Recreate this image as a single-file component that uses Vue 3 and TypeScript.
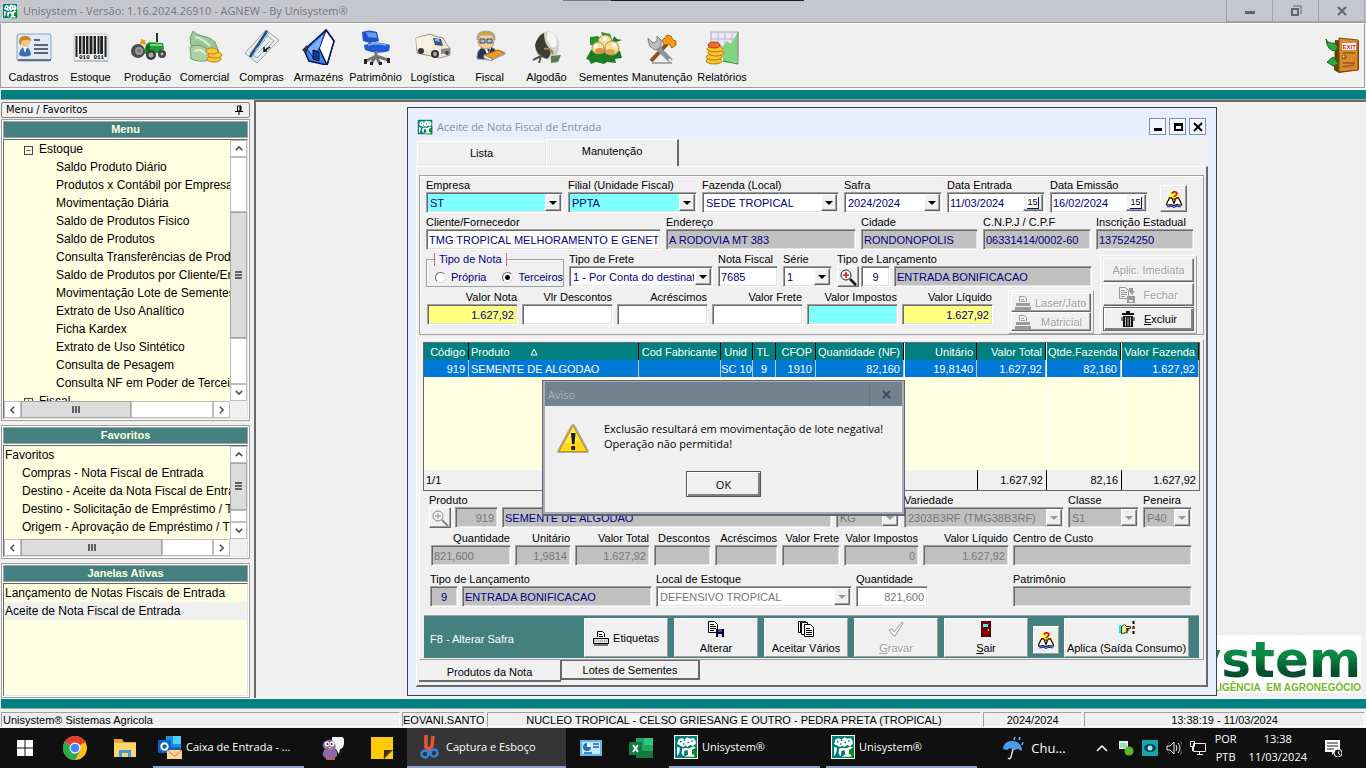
<script setup lang="ts">
import { ref } from 'vue'

type Kind = 'text' | 'select' | 'date' | 'gap' | 'find'
interface Field {
  id: string
  w: number
  label?: string
  value?: string
  kind?: Kind
  tone?: string
  right?: boolean
  labelRight?: boolean
  center?: boolean
  off?: boolean
}

const brand = '<rect width="16" height="16" fill="#fff"/><rect x=".7" y=".7" width="14.600" height="14.600" fill="#007c74"/><path d="M9 8h6.300v7.300H9z" fill="#008a1c"/><path d="M2 6l1-3 2-1 2 1 2-1.500 2 1 2-.5 1.500 2v2l-2 1.500-1.500-1L9 8 7.500 7 6 8 4 7z" fill="#fff"/><path d="M4 4h1v1H4zM6.500 3h1v1h-1zM9 4.500h1v1H9zM11.500 3.500h1v1h-1zM6 5.500h1v1H6z" fill="#007c74"/><path d="M2 8l2 .5L3.500 12 2 14h4l-1-2 .5-3L8 8.500 10 9l3-1.500 1.500 1L12 10v3h1.500v1.500H7L9.500 13l-.5-3-2 .5L6.500 14H2z" fill="#fff"/>'

const icons: Record<string, string> = {
  Cadastros: '<rect x="1" y="5" width="34" height="27" rx="2" fill="#dfe9f4" stroke="#8fa3bd"/><path d="M2 31h33" stroke="#456" stroke-width="1.5"/><path d="M3 26q1-8 6-8t6 8q-6 3-12 0" fill="#3a6fae"/><path d="M7 18l2 6 2-6z" fill="#fff"/><circle cx="9" cy="13" r="5" fill="#f3c48e"/><path d="M3 13q0-6 6-6t6 5q-4-2-8-1-2 1-2 5-2-1-2-3" fill="#c98316"/><path d="M18 11h6M18 16h14M18 20h14M18 24h14" stroke="#5b6573" stroke-width="2"/>',
  Estoque: '<rect x="1" y="5" width="34" height="27" rx="1" fill="#f2f2f4" stroke="#c3c6cc"/><path d="M3.500 7v21M7 7v18M11 7v18M14 7v18M18 7v18M22 7v18M25.500 7v18M29 7v18M32.500 7v21" stroke="#222" stroke-width="2"/><path d="M9 7v18M16 7v18M20 7v18M27.500 7v18" stroke="#444"/><text x="6" y="30" font-size="6" font-family="Liberation Mono" font-weight="bold">010 011</text><path d="M1 32h34" stroke="#9aa"/>',
  'Produção': '<path d="M16 16l3-3 14 1 1 6-6 4-15 1z" fill="#1f9a34"/><path d="M16 16l4-1v6l-4 1z" fill="#0d6b20"/><path d="M20 15h12v2H20z" fill="#6fd67c"/><path d="M10 15l1-5 4 1 1 5z" fill="#e8a21d"/><path d="M27 4v9" stroke="#333" stroke-width="2"/><circle cx="8" cy="22" r="7" fill="#4d4d4d"/><circle cx="9" cy="22" r="4" fill="#9a9a9a"/><circle cx="9" cy="22" r="2" fill="#777"/><circle cx="21" cy="26" r="5" fill="#3c3c3c"/><circle cx="21" cy="26" r="2.500" fill="#aaa"/><circle cx="32" cy="25" r="4" fill="#444"/><circle cx="32" cy="25" r="1.500" fill="#bbb"/>',
  Comercial: '<path d="M3 9l3-7q3 4 10 5t12 6l4 10-16 1-12-8z" fill="#9fc79a" stroke="#6f9f6d"/><path d="M8 8q7 1 15 9" stroke="#d9ecd2" fill="none" stroke-width="2"/><path d="M3 18q8-4 16 1l6 10q-8 6-21 1z" fill="#aed1a6" stroke="#6f9f6d"/><path d="M8 22q6-3 10 3" stroke="#e4f2df" fill="none" stroke-width="2"/><g fill="#f8c832" stroke="#bd8410"><ellipse cx="27" cy="30" rx="7" ry="3"/><ellipse cx="28" cy="26" rx="7" ry="3"/><ellipse cx="25" cy="22" rx="6" ry="3"/></g>',
  Compras: '<g fill="#e6ebee" stroke="#9aa5ab"><path d="M1 24L22 1l13 10-22 23z"/><path d="M6 24L22 6l8 6-17 17z"/></g><path d="M6 28L23 2" stroke="#1c4f87" stroke-width="2.500"/><path d="M8 28L25 4" stroke="#8db6da"/><path d="M14 24l12-12M11 21l10-10" stroke="#9aa5ab"/><path d="M20 22l6-4M20 18v4h3" stroke="#111" stroke-width="1.500" fill="none"/>',
  'Armazéns': '<path d="M3 21L25 1l8 11-7 24-18-4z" fill="#3f83f0" stroke="#06145a" stroke-width="1.500"/><path d="M25 1l8 11-7 24-8-17z" fill="#fff" stroke="#06145a" stroke-width="1.500"/><path d="M6 20L24 3l-5 15-7 10z" fill="#78aefc" stroke="#123a9a"/><path d="M12 21l6 2v9l-6-2z" fill="#0c3aa0" stroke="#011"/><path d="M1 21l5-5v9z" fill="#333"/>',
  'Patrimônio': '<path d="M4 3q7-3 15 0l2 9q-8 3-16 0z" fill="#1f52cf"/><path d="M8 3l10 1 1 5-9-1z" fill="#6e9bf2"/><path d="M11 13l3 4" stroke="#555" stroke-width="3"/><path d="M6 16q13-5 26 0l-1 6q-12 4-24-1z" fill="#2459d6"/><path d="M10 16q9-3 18 0" stroke="#7ea8f8" stroke-width="2" fill="none"/><path d="M18 22v6M18 27l-10 5M18 27l4 8M18 27l12 4M18 27l-5 8" stroke="#777" stroke-width="3"/><path d="M6 30h3v5H6zM12 33h3v3h-3zM21 33h3v3h-3zM29 29h3v5h-3z" fill="#222"/>',
  'Logística': '<path d="M1 9l14-4 5 2 8 2 4 7 3 3v7l-10 3-23-5z" fill="#ece6d4" stroke="#9b9480"/><path d="M1 9l15-3 2 15-16-1z" fill="#f6f1e2"/><path d="M18 9l8 1 2 7-8-1z" fill="#34507c"/><path d="M20 10l4 0 1 3-5-1z" fill="#90b0d8"/><path d="M26 20l9-1v5l-9 1z" fill="#888"/><circle cx="6" cy="22" r="3" fill="#333"/><circle cx="20" cy="25" r="4" fill="#333"/><circle cx="20" cy="25" r="2" fill="#aaa"/><circle cx="32" cy="24" r="2" fill="#444"/>',
  Fiscal: '<path d="M5 30q-1-9 6-12h8q6 2 7 9l-9 4z" fill="#27364f" stroke="#a9adb5"/><path d="M12 19l4 8 3-8z" fill="#fff"/><path d="M15 20l2 5 1-5z" fill="#2455aa"/><circle cx="14" cy="12" r="8" fill="#f6cf98" stroke="#bb955f"/><path d="M5 11q-1-9 9-9 10 0 9 9l-3-5H8z" fill="#d6a03a" stroke="#a5a7ad"/><path d="M8 10h5v4H8zM15 10h5v4h-5z" fill="#9fc6ea" stroke="#345"/><path d="M12 26l14-5 7 3-13 6z" fill="#f39a1b" stroke="#a6640e"/><path d="M12 26l8 4v2l-8-3zM20 31l13-6v-1l-13 6z" fill="#fff" stroke="#999"/>',
  'Algodão': '<path d="M6 16Q9 3 19 2q11 3 11 15 0 10-7 14l-11-2q-7-4-6-13" fill="#cfd2c9"/><path d="M6 16Q9 6 15 4q0 10 5 15 4 6-2 11-11-3-12-14" fill="#3c3e34"/><path d="M19 2q9 3 9 13-2 5-5 3-8-6-4-16" fill="#f7f7f2"/><path d="M15 20q7-2 9 5" stroke="#a18163" stroke-width="2" fill="none"/><path d="M4 31l8-4-2 7" stroke="#555" fill="none" stroke-width="2"/><path d="M22 27l10-1-3 7-7 1z" fill="#5e7a54"/>',
  Sementes: '<path d="M0 30l5-9 9-1 5 1 5-1 10 2 2 7-7 1 1 4-9-1-3 2-8-2-5 2-2-4z" fill="#1b7d26"/><path d="M4 8l8-1 6 5-6 5-8-1zM15 3l9 2 3 7-9 1z" fill="#279235"/><path d="M28 7l-2 7 4-1 6-2-5-1z" fill="#1b7d26"/><g fill="#f4e09a" stroke="#b3923f"><circle cx="19" cy="13" r="7"/><circle cx="12" cy="19" r="6"/><circle cx="26" cy="19" r="7"/></g><ellipse cx="14" cy="22" rx="5" ry="3" fill="#d99745"/><ellipse cx="24" cy="23" rx="5" ry="3" fill="#dfa253"/><circle cx="19" cy="10" r="2" fill="#fff"/><circle cx="28" cy="16" r="2" fill="#fff"/><circle cx="10" cy="17" r="2" fill="#fff"/>',
  'Manutenção': '<path d="M8 34h20" stroke="#aaa" stroke-width="2"/><path d="M7 32L23 15" stroke="#8d4f1e" stroke-width="4"/><path d="M18 11l3-2 2-3 4 1 2 4 3 1v4l-4 3-3-4-5 1z" fill="#f39a1b" stroke="#b26a0b"/><path d="M12 17l15 15" stroke="#8d939b" stroke-width="5"/><path d="M4 9l5 5 4-2 0-5 4 4v7l-5 3q-8-2-8-12" fill="#b9bec5" stroke="#7d838b"/><circle cx="26" cy="31" r="1.500" fill="#eee"/>',
  'Relatórios': '<rect x="7" y="3" width="27" height="24" fill="#ece8f6" stroke="#aaa"/><path d="M14 3v24M21 3v24M28 3v24M7 10h27M7 17h27" stroke="#bbb5cc"/><path d="M19 33V18l4-6 4 3 7-12v31z" fill="#7fd67f"/><path d="M34 3v32" stroke="#888"/><path d="M19 32l15 3" stroke="#3d8a3d"/><g fill="#fbc42d" stroke="#b77f0c"><ellipse cx="10" cy="32" rx="8" ry="3"/><ellipse cx="10" cy="28" rx="8" ry="3"/><ellipse cx="12" cy="24" rx="8" ry="3"/><ellipse cx="11" cy="20" rx="8" ry="3"/></g><ellipse cx="10" cy="16" rx="6" ry="3" fill="#ee6e25" stroke="#a63a10"/>',
  exit: '<path d="M10 3l24 1v29l-20 3-5-3z" fill="#6b3d0a"/><path d="M14 1l19 2v30l-19 2z" fill="#d98a2b" stroke="#7b4a10"/><path d="M18 16h12M18 26h12M17 30l12-2" stroke="#a9631a" stroke-width="2"/><rect x="17" y="6" width="14" height="7" fill="#fff"/><text x="17.500" y="12" font-size="6" font-weight="bold" fill="#e01020" font-family="Liberation Sans">EXIT</text><circle cx="19" cy="20" r="2.500" fill="#8a6a20"/><circle cx="18.500" cy="19.500" r="1" fill="#f5dd90"/><path d="M1 2q2 5 8 4l4 4-2 4q-9 0-10-12M2 25l6-5 6 7-6 2z" fill="#2fa83c" stroke="#0f6a1c"/>',
  help: '<path d="M4 1h8v10H4zM2 6h12v4H2z" fill="#ffff54"/><path d="M1.500 12l2.500-5 2 0 2 5 2-5 2 0 2.500 5v1.500l-4-.5-2.500 1-2.500-1-4 .5z" fill="#fff" stroke="#000"/><path d="M2 15l4-.5 2 1 2-1 4 .5" stroke="#1230d8" fill="none"/><text x="5" y="9" font-size="11" font-weight="bold" fill="#e00010" font-family="Liberation Sans">?</text>',
  mag: '<circle cx="7" cy="7" r="5" fill="#fff" stroke="#222"/><path d="M7 4v6M4 7h6" stroke="#e01010" stroke-width="1.500"/><path d="M11 11l6 6" stroke="#111" stroke-width="2.500"/>',
  magOff: '<circle cx="7" cy="7" r="5" fill="#f4f4f4" stroke="#888"/><path d="M7 4v6M4 7h6" stroke="#888"/><path d="M11 11l6 6" stroke="#888" stroke-width="2"/>',
  printer: '<path d="M4.500 7V1.500h5l2 2V7" fill="#fff" stroke="currentColor"/><path d="M6 4.500h3M6 6.500h4" stroke="currentColor"/><path d="M.5 8.500h15v5H.5z" fill="#ddd" stroke="currentColor"/><path d="M1 11h14" stroke="#888" stroke-dasharray="1 1"/><path d="M1 15h14" stroke="currentColor"/>',
  printerOff: '<path d="M4.500 7V1.500h5l2 2V7" fill="none" stroke="#999"/><path d="M6 4.500h3M6 6.500h4" stroke="#999"/><path d="M1 8h14v3H1zM0 12h16v3H0z" fill="#999"/>',
  save: '<path d="M.5.500h6l3 3v8h-9z" fill="#fff" stroke="currentColor"/><path d="M2 3.500h4M2 5.500h6M2 7.500h6M2 9.500h4" stroke="currentColor"/><path d="M8 8h8v8H8z" fill="currentColor"/><path d="M10 8h4v3h-4z" fill="#3a4ad0"/><path d="M10 13h4v3h-4z" fill="#ddd"/>',
  close: '<path d="M.5.500h6l3 3v8h-9z" fill="none" stroke="#999"/><path d="M2 3.500h4M2 5.500h6M2 7.500h6M2 9.500h4" stroke="#999"/><path d="M10 1h4v3h2l-3 4-3-4z" fill="#999"/><path d="M8 9h8v7H8z" fill="#999"/><path d="M10 13h4v2h-4z" fill="#f0f0f0"/>',
  trash: '<path d="M6 0h4v2H6zM2 2h12v2H2zM3 5h10v11H3z" fill="#111"/><path d="M5.500 6v9M8 6v9M10.500 6v9" stroke="#bbb"/><path d="M2 6v4M14 6v4" stroke="#111"/>',
  docs: '<g fill="#fff" stroke="#000"><path d="M.5.500h7v11h-7z"/><path d="M3.500 1.500h6v12h-6z"/><path d="M6.500 3.500h6l3 3v9h-9z"/></g><path d="M8 7.500h4M8 9.500h6M8 11.500h6M8 13.500h6M2.500 1v11" stroke="#000"/>',
  check: '<path d="M1 9l3-1 2 3 8-10 1 1-8 13H6z" fill="#fff" stroke="#999"/>',
  door: '<path d="M3 0h10v16H3z" fill="#7c0010"/><path d="M3.500 0v16h9V0z" fill="none" stroke="#400"/><path d="M5 3h5v3H5z" fill="#39f2f2"/><path d="M10 8h1v2h-1z" fill="#ff0"/>',
  hand: '<path d="M0 4h2v8H0z" fill="#0ee"/><path d="M2.500 5.500l3-2 2 2h4v2h-4v1h2v1h-2v1h1v1l-6 1z" fill="#ffe97a" stroke="#333"/><path d="M14.500 0v15" stroke="#000" stroke-width="2" stroke-dasharray="3 2"/><path d="M13.500 6h2v2h-2z" fill="#e00"/>',
  warn: '<path d="M16 1q1.500 0 2.500 2l13 24q1 2-1 3H1.500q-2-1-1-3l13-24Q14.500 1 16 1" fill="#aaa"/><path d="M16 2.500L30 28.500H2z" fill="#ffd91a" stroke="#c99900"/><path d="M16 4l-8 16q10 2 14-4z" fill="#fff27a" opacity=".6"/><path d="M14 10h4.500l-1 11h-2.500z" fill="#1d1d1d"/><circle cx="16.200" cy="25" r="2.200" fill="#1d1d1d"/>',
  chrome: '<circle cx="12" cy="12" r="12" fill="#fbc116"/><path d="M12 12L1.600 6A12 12 0 0 1 22.400 6z" fill="#e33b2e"/><path d="M12 12L1.600 6A12 12 0 0 0 12 24l5-9z" fill="#2da94f"/><circle cx="12" cy="12" r="5.500" fill="#fff"/><circle cx="12" cy="12" r="4.300" fill="#4285f4"/>',
  folder: '<path d="M1 3h8l2 3h12v15H1z" fill="#e9a820"/><path d="M1 7h22v14H1z" fill="#fbd66a"/><path d="M6 14h12v7H6z" fill="#3d9be0"/><path d="M9 17h6v4H9z" fill="#fbd66a"/>',
  outlook: '<path d="M8 1h15v15H8z" fill="#1f8fdc"/><path d="M15 1h8v8h-8z" fill="#50d0ff"/><path d="M8 12h15v6H8z" fill="#0f64b4"/><rect y="5" width="13" height="13" rx="1" fill="#0a62c0"/><circle cx="6.500" cy="11.500" r="3.200" fill="none" stroke="#fff" stroke-width="2"/><path d="M9 15h15v9H9z" fill="#ffd199"/><path d="M9 15l7.500 6L24 15" fill="none" stroke="#b97f3c"/>',
  bird: '<path d="M12 1h10q3 1 2 7-1 5-4 5l-1 5-3-5h-4z" fill="#f5f5f7"/><path d="M4 6q6-5 10 0 3 4 1 7 5 5 0 9-7 3-11-1-3-3 1-8-4-3-1-7" fill="#8a6aa8"/><circle cx="7" cy="8" r="2.500" fill="#fff"/><circle cx="12" cy="8" r="2.500" fill="#fff"/><circle cx="7.500" cy="8" r="1" fill="#222"/><circle cx="11.500" cy="8" r="1" fill="#222"/><path d="M8 11l4 0-2 3z" fill="#f2a73a"/><path d="M6 22h9v2H6z" fill="#c95b3a"/>',
  sticky: '<path d="M1 1h22v22H1z" fill="#ffca0a"/><path d="M14 23q-2-8 9-9z" fill="#5b4a12"/><path d="M14 14h9q-6 1-9 9z" fill="#3a3010"/>',
  snip: '<path d="M8 0v12l4 4M15 1l-1 10-4 5" fill="none" stroke="#e8542f" stroke-width="3.500"/><circle cx="7" cy="19" r="3.500" fill="none" stroke="#2f86e0" stroke-width="2.500"/><circle cx="16" cy="18" r="3.500" fill="none" stroke="#2f86e0" stroke-width="2.500"/>',
  panel: '<path d="M1 4h22v16H1z" fill="#5fb7f0"/><path d="M3 6h18v12H3z" fill="#c8e9fb"/><circle cx="8" cy="11" r="4" fill="#2470b8"/><path d="M8 11V7a4 4 0 0 1 4 4z" fill="#fff"/><path d="M14 8h6M14 11h6M5 17h8" stroke="#1c66a8" stroke-width="1.500"/>',
  excel: '<path d="M7 2h17v20H7z" fill="#21a366"/><path d="M15 2h9v7h-9z" fill="#33c481"/><path d="M7 15h17v7H7z" fill="#107c41"/><rect y="6" width="13" height="13" rx="1" fill="#107c41"/><path d="M4 9l5 7M9 9l-5 7" stroke="#fff" stroke-width="1.800"/>',
  rain: '<path d="M2 13Q3 4 12 5q9 1 9 10l-4-2-4 1-4-2-3 2z" fill="#4a9be8"/><path d="M12 13l-2 8q-1 3-3 1" stroke="#ddd" stroke-width="1.500" fill="none"/><path d="M14 1l-1 3M19 1l-1 3M22 6l-1 3" stroke="#6cb8ff" stroke-width="1.500"/>',
  win: '<path d="M0 0h7.500v7.500H0zM8.500 0H16v7.500H8.500zM0 8.500h7.500V16H0zM8.500 8.500H16V16H8.500z" fill="#fff"/>',
  t1: '<path d="M1 1h9v8l-9 0z" fill="#e8eef0"/><path d="M2 3h7v5H2z" fill="#9db"/><circle cx="11" cy="11" r="4.500" fill="#5cb531"/>',
  t2: '<rect width="16" height="16" rx="1" fill="#18a5ad"/><ellipse cx="8" cy="8" rx="6" ry="4" fill="#0b3f50"/><circle cx="8" cy="8" r="2.500" fill="#9ee"/>',
  t3: '<path d="M1 6h3l4-4v12l-4-4H1z" fill="none" stroke="#eee"/><path d="M10 5q2 3 0 6M12 3q4 5 0 10" stroke="#eee" fill="none"/><path d="M14.500 1.500q4 6 0 13" stroke="#777" fill="none"/>',
  t4: '<path d="M3.500 3.500h12v8h-12zM7 14.500h6M9.500 12v3M.5 1.500h4v5h-4zM2.500 7v4" fill="none" stroke="#eee"/>',
  note: '<path d="M1 1h15v12h-5l-3 3v-3H1z" fill="#fff"/><path d="M3 4h11M3 7h11M3 10h7" stroke="#222"/><circle cx="14" cy="14" r="4" fill="#111" stroke="#fff"/><path d="M15 12q-2 2 1 4" stroke="#fff" fill="none"/>',
}

const modules = ['Cadastros', 'Estoque', 'Produção', 'Comercial', 'Compras', 'Armazéns', 'Patrimônio', 'Logística', 'Fiscal', 'Algodão', 'Sementes', 'Manutenção', 'Relatórios']
const tree = ['Saldo Produto Diário', 'Produtos x Contábil por Empresa', 'Movimentação Diária', 'Saldo de Produtos Fisico', 'Saldo de Produtos', 'Consulta Transferências de Produtos', 'Saldo de Produtos por Cliente/Empresa', 'Movimentação Lote de Sementes', 'Extrato de Uso Analítico', 'Ficha Kardex', 'Extrato de Uso Sintético', 'Consulta de Pesagem', 'Consulta NF em Poder de Terceiros']
const favorites = ['Compras - Nota Fiscal de Entrada', 'Destino - Aceite da Nota Fiscal de Entrada', 'Destino - Solicitação de Empréstimo / Transferência', 'Origem - Aprovação de Empréstimo / Transferência']

const rowHead: Field[] = [
  { id: 'empresa', w: 137, label: 'Empresa', value: 'ST', kind: 'select', tone: 'cyan' },
  { id: 'filial', w: 129, label: 'Filial (Unidade Fiscal)', value: 'PPTA', kind: 'select', tone: 'cyan' },
  { id: 'fazenda', w: 137, label: 'Fazenda (Local)', value: 'SEDE TROPICAL', kind: 'select' },
  { id: 'safra', w: 98, label: 'Safra', value: '2024/2024', kind: 'select' },
  { id: 'entrada', w: 98, label: 'Data Entrada', value: '11/03/2024', kind: 'date' },
  { id: 'emissao', w: 98, label: 'Data Emissão', value: '16/02/2024', kind: 'date' },
]
const rowParty: Field[] = [
  { id: 'cliente', w: 235, label: 'Cliente/Fornecedor', value: 'TMG TROPICAL MELHORAMENTO E GENETICA LTDA' },
  { id: 'endereco', w: 190, label: 'Endereço', value: 'A RODOVIA MT 383', tone: 'gray' },
  { id: 'cidade', w: 117, label: 'Cidade', value: 'RONDONOPOLIS', tone: 'gray' },
  { id: 'cnpj', w: 108, label: 'C.N.P.J / C.P.F', value: '06331414/0002-60', tone: 'gray' },
  { id: 'ie', w: 98, label: 'Inscrição Estadual', value: '137524250', tone: 'gray' },
]
const rowType: Field[] = [
  { id: 'frete', w: 144, label: 'Tipo de Frete', value: '1 - Por Conta do destinatário', kind: 'select' },
  { id: 'nota', w: 60, label: 'Nota Fiscal', value: '7685' },
  { id: 'serie', w: 49, label: 'Série', value: '1', kind: 'select' },
]
const rowTotals: Field[] = [
  { id: 'vnota', w: 91, label: 'Valor Nota', value: '1.627,92', tone: 'yellow' },
  { id: 'vdesc', w: 91, label: 'Vlr Descontos', value: '' },
  { id: 'vacr', w: 91, label: 'Acréscimos', value: '' },
  { id: 'vfrete', w: 91, label: 'Valor Frete', value: '' },
  { id: 'vimp', w: 91, label: 'Valor Impostos', value: '', tone: 'cyan' },
  { id: 'vliq', w: 91, label: 'Valor Líquido', value: '1.627,92', tone: 'yellow' },
].map((f) => ({ ...f, right: true, labelRight: true }))

const rowItem: Field[] = [
  { id: 'busca', w: 22, label: 'Produto', kind: 'find' },
  { id: 'codProduto', w: 43, value: '919', tone: 'gray', right: true, off: true },
  { id: 'nomeProduto', w: 330, value: 'SEMENTE DE ALGODAO', tone: 'gray' },
  { id: 'unidade', w: 64, value: 'KG', kind: 'select', tone: 'gray', off: true },
  { id: 'variedade', w: 160, label: 'Variedade', value: '2303B3RF (TMG38B3RF)', kind: 'select', tone: 'gray', off: true },
  { id: 'classe', w: 71, label: 'Classe', value: 'S1', kind: 'select', tone: 'gray', off: true },
  { id: 'peneira', w: 49, label: 'Peneira', value: 'P40', kind: 'select', tone: 'gray', off: true },
]
const rowAmounts: Field[] = [
  { id: 'qtd', w: 80, label: 'Quantidade', value: '821,600', labelRight: true },
  { id: 'unit', w: 56, label: 'Unitário', value: '1,9814', right: true, labelRight: true },
  { id: 'vtotal', w: 75, label: 'Valor Total', value: '1.627,92', right: true, labelRight: true },
  { id: 'desc', w: 57, label: 'Descontos', value: '', labelRight: true },
  { id: 'acr', w: 63, label: 'Acréscimos', value: '', labelRight: true },
  { id: 'frete2', w: 58, label: 'Valor Frete', value: '', labelRight: true },
  { id: 'imp2', w: 75, label: 'Valor Impostos', value: '0', right: true, labelRight: true },
  { id: 'liq2', w: 86, label: 'Valor Líquido', value: '1.627,92', right: true, labelRight: true },
  { id: 'custo', w: 179, label: 'Centro de Custo', value: '' },
].map((f) => ({ ...f, tone: 'gray', off: true }))
const rowStock: Field[] = [
  { id: 'tl', w: 28, label: 'Tipo de Lançamento', value: '9', tone: 'gray', center: true },
  { id: 'tlDesc', w: 190, value: 'ENTRADA BONIFICACAO', tone: 'gray' },
  { id: 'local', w: 196, label: 'Local de Estoque', value: 'DEFENSIVO TROPICAL', kind: 'select', off: true },
  { id: 'qtdEst', w: 72, label: 'Quantidade', value: '821,600', right: true, off: true },
  { id: 'espaco', w: 77, kind: 'gap' },
  { id: 'patr', w: 179, label: 'Patrimônio', value: '', tone: 'gray' },
]
const topRows = [rowHead, rowParty]
const bottomRows = [rowItem, rowAmounts, rowStock]

const columns = [
  { t: 'Código', w: 45, v: '919', f: '1/1' },
  { t: 'Produto', w: 170, v: 'SEMENTE DE ALGODAO', l: true },
  { t: 'Cod Fabricante', w: 82, v: '' },
  { t: 'Unid', w: 32, v: 'SC 10', c: true },
  { t: 'TL', w: 23, v: '9', c: true },
  { t: 'CFOP', w: 40, v: '1910' },
  { t: 'Quantidade (NF)', w: 88, v: '82,160' },
  { t: 'Unitário', w: 73, v: '19,8140', s: true },
  { t: 'Valor Total', w: 69, v: '1.627,92', f: '1.627,92' },
  { t: 'Qtde.Fazenda', w: 75, v: '82,160', f: '82,16', s: true },
  { t: 'Valor Fazenda', w: 78, v: '1.627,92', f: '1.627,92', s: true },
]

const tipo = ref('terceiros')
const width = (f: { w: number }) => ({ flex: `${f.w} ${f.w} 0` })
</script>

<template>
  <div class="app">
    <header class="titlebar">
      <svg class="i16" viewBox="0 0 16 16" v-html="brand" />
      <span>Unisystem - Versão: 1.16.2024.26910 - AGNEW - By Unisystem®</span>
      <i class="peek" />
      <div class="winbtns">
        <button aria-label="Minimizar"><svg viewBox="0 0 12 12"><path d="M1 6h10v3H1z" fill="#65666b" /></svg></button>
        <button aria-label="Restaurar"><svg viewBox="0 0 12 12"><path d="M2 4h6v6H2z" fill="none" stroke="#65666b" stroke-width="2" /><path d="M3 1h8v8" fill="none" stroke="#65666b" /></svg></button>
        <button aria-label="Fechar"><svg viewBox="0 0 12 12"><path d="M2 2l8 8M10 2l-8 8" stroke="#65666b" stroke-width="2" /></svg></button>
      </div>
    </header>

    <nav class="toolbar">
      <button v-for="m in modules" :key="m"><svg class="i36" viewBox="0 0 36 36" v-html="icons[m]" /><span>{{ m }}</span></button>
      <button class="exit" aria-label="Sair do sistema"><svg class="i36" viewBox="0 0 36 36" v-html="icons.exit" /></button>
    </nav>
    <div class="teal-strip" />

    <main class="main">
      <aside class="side">
        <div class="side-head"><span>Menu / Favoritos</span><svg viewBox="0 0 8 10"><path d="M2.500 1h3v5h-3zM5 1h1v5H5zM0 6.500h8M4 7v3" fill="none" stroke="#000" /></svg></div>

        <section class="box menu">
          <h2>Menu</h2>
          <div class="list">
            <div class="view">
              <ul>
                <li class="node"><i class="pm">−</i>Estoque</li>
                <li v-for="t in tree" :key="t" class="leaf">{{ t }}</li>
                <li class="node"><i class="pm">+</i>Fiscal</li>
              </ul>
              <div class="vbar">
                <b><svg viewBox="0 0 10 6"><path d="M1 5l4-4 4 4" /></svg></b>
                <i class="track" /><i class="thumb v1"><u /></i><i class="track after" />
                <b><svg viewBox="0 0 10 6"><path d="M1 1l4 4 4-4" /></svg></b>
              </div>
            </div>
            <div class="hbar">
              <b><svg viewBox="0 0 6 10"><path d="M5 1L1 5l4 4" /></svg></b><i class="hthumb short"><u /></i><i class="track" />
              <b><svg viewBox="0 0 6 10"><path d="M1 1l4 4-4 4" /></svg></b>
            </div>
          </div>
        </section>

        <section class="box favs">
          <h2>Favoritos</h2>
          <div class="list">
            <div class="view">
              <ul>
                <li class="root">Favoritos</li>
                <li v-for="t in favorites" :key="t" class="fav">{{ t }}</li>
              </ul>
              <div class="vbar">
                <b><svg viewBox="0 0 10 6"><path d="M1 5l4-4 4 4" /></svg></b>
                <i class="thumb v2"><u /></i><i class="track" />
                <b><svg viewBox="0 0 10 6"><path d="M1 1l4 4 4-4" /></svg></b>
              </div>
            </div>
            <div class="hbar">
              <b><svg viewBox="0 0 6 10"><path d="M5 1L1 5l4 4" /></svg></b><i class="hthumb long"><u /></i><i class="track" />
              <b><svg viewBox="0 0 6 10"><path d="M1 1l4 4-4 4" /></svg></b>
            </div>
          </div>
        </section>

        <section class="box wins">
          <h2>Janelas Ativas</h2>
          <div class="list">
            <ul>
              <li class="root">Lançamento de Notas Fiscais de Entrada</li>
              <li class="root current">Aceite de Nota Fiscal de Entrada</li>
            </ul>
          </div>
        </section>
      </aside>

      <section class="desk">
        <div class="logo"><strong>unisystem</strong><span>INTELIGÊNCIA&nbsp; EM AGRONEGÓCIO</span></div>

        <article class="win">
          <header class="win-head">
            <svg class="i16" viewBox="0 0 16 16" v-html="brand" />
            <h1>Aceite de Nota Fiscal de Entrada</h1>
            <button aria-label="Minimizar janela"><svg viewBox="0 0 10 10"><path d="M1 6h8v3H1z" /></svg></button>
            <button aria-label="Maximizar janela"><svg viewBox="0 0 10 10"><path d="M1 1h9v8H1zM3 4v3h5V4z" fill-rule="evenodd" /></svg></button>
            <button aria-label="Fechar janela"><svg viewBox="0 0 10 10"><path d="M1 1l8 8M9 1L1 9" stroke="#000" stroke-width="2" /></svg></button>
          </header>

          <div class="win-body">
            <div class="tabs"><button>Lista</button><button class="on">Manutenção</button></div>
            <div class="page">
              <form class="group" @submit.prevent>
                <div v-for="(row, r) in topRows" :key="r" class="row" :class="'top' + r">
                  <div v-for="f in row" :key="f.id" class="f" :style="width(f)">
                    <label :for="f.id">{{ f.label }}</label>
                    <div v-if="f.kind === 'select'" class="ctl" :class="f.tone">
                      <select :id="f.id"><option>{{ f.value }}</option></select><i class="drop" />
                    </div>
                    <div v-else class="ctl" :class="f.tone">
                      <input :id="f.id" :value="f.value" /><button v-if="f.kind === 'date'" class="cal" :aria-label="'Calendário ' + f.label"><i>15</i></button>
                    </div>
                  </div>
                  <button v-if="r === 0" class="btn square" aria-label="Ajuda"><svg viewBox="0 0 16 16" v-html="icons.help" /></button>
                </div>

                <div class="split">
                  <div class="left">
                    <div class="row">
                      <div class="f" :style="width({ w: 138 })">
                        <fieldset>
                          <legend>Tipo de Nota</legend>
                          <label><input v-model="tipo" type="radio" name="tipo" value="propria" />Própria</label>
                          <label><input v-model="tipo" type="radio" name="tipo" value="terceiros" />Terceiros</label>
                        </fieldset>
                      </div>
                      <div v-for="f in rowType" :key="f.id" class="f" :style="width(f)">
                        <label :for="f.id">{{ f.label }}</label>
                        <div v-if="f.kind === 'select'" class="ctl">
                          <select :id="f.id"><option>{{ f.value }}</option></select><i class="drop" />
                        </div>
                        <div v-else class="ctl"><input :id="f.id" :value="f.value" /></div>
                      </div>
                      <div class="f" :style="width({ w: 255 })">
                        <label for="lanc">Tipo de Lançamento</label>
                        <div class="lanc">
                          <button class="btn find" aria-label="Pesquisar lançamento"><svg viewBox="0 0 18 18" v-html="icons.mag" /></button>
                          <div class="ctl code"><input id="lanc" value="9" /></div>
                          <div class="ctl gray grow"><input aria-label="Descrição do lançamento" value="ENTRADA BONIFICACAO" readonly /></div>
                        </div>
                      </div>
                    </div>
                    <div class="row totals">
                      <div v-for="f in rowTotals" :key="f.id" class="f" :style="width(f)">
                        <label :for="f.id" class="r">{{ f.label }}</label>
                        <div class="ctl" :class="f.tone"><input :id="f.id" class="r" :value="f.value" /></div>
                      </div>
                      <div class="frame print">
                        <button class="btn" disabled><svg viewBox="0 0 16 16" v-html="icons.printerOff" />Laser/Jato</button>
                        <button class="btn" disabled><svg viewBox="0 0 16 16" v-html="icons.printerOff" />Matricial</button>
                      </div>
                    </div>
                  </div>
                  <div class="frame acts">
                    <button class="btn" disabled>Aplic. Imediata</button>
                    <button class="btn" disabled><svg viewBox="0 0 16 16" v-html="icons.close" />Fechar</button>
                    <button class="btn focus"><svg viewBox="0 0 16 16" v-html="icons.trash" /><span><u>E</u>xcluir</span></button>
                  </div>
                </div>
              </form>

              <div class="panel">
                <table>
                  <colgroup><col v-for="c in columns" :key="c.t" :style="{ width: c.w + 'px' }" /></colgroup>
                  <thead>
                    <tr>
                      <th v-for="c in columns" :key="c.t" :class="{ l: c.l, c: c.c, s: c.s }">{{ c.t }}<svg v-if="c.l" class="sort" viewBox="0 0 8 8"><path d="M4 1L1 7h6z" fill="none" stroke="#fff" /></svg></th>
                    </tr>
                  </thead>
                  <tbody>
                    <tr class="sel"><td v-for="c in columns" :key="c.t" :class="{ l: c.l, c: c.c, s: c.s }">{{ c.v }}</td></tr>
                    <tr class="blank"><td v-for="c in columns" :key="c.t" :class="{ s: c.s }" /></tr>
                  </tbody>
                  <tfoot>
                    <tr><td v-for="(c, n) in columns" :key="c.t" :class="{ l: n === 0, line: n > 7 }">{{ c.f }}</td></tr>
                  </tfoot>
                </table>

                <div v-for="(row, r) in bottomRows" :key="r" class="row low" :class="'low' + r">
                  <template v-for="f in row" :key="f.id">
                    <div v-if="f.kind === 'gap'" :style="width(f)" />
                    <div v-else class="f" :class="{ off: f.off }" :style="width(f)">
                      <label v-if="f.label" :for="f.id" :class="{ r: f.labelRight }">{{ f.label }}</label>
                      <button v-if="f.kind === 'find'" :id="f.id" class="btn find"><svg viewBox="0 0 18 18" v-html="icons.magOff" /></button>
                      <div v-else-if="f.kind === 'select'" class="ctl" :class="f.tone">
                        <select :id="f.id" :disabled="f.off" :aria-label="f.label ?? f.id"><option>{{ f.value }}</option></select><i class="drop dim" />
                      </div>
                      <div v-else class="ctl" :class="f.tone">
                        <input :id="f.id" :class="{ r: f.right, c: f.center }" :value="f.value" :disabled="f.off" :aria-label="f.label ?? f.id" />
                      </div>
                    </div>
                  </template>
                </div>

                <div class="bar">
                  <span class="hint">F8 - Alterar Safra</span>
                  <button class="big side-by"><svg viewBox="0 0 16 16" v-html="icons.printer" />Etiquetas</button>
                  <button class="big"><svg viewBox="0 0 16 16" v-html="icons.save" /><span>Alterar</span></button>
                  <button class="big"><svg viewBox="0 0 16 16" v-html="icons.docs" /><span>Aceitar Vários</span></button>
                  <button class="big" disabled><svg viewBox="0 0 16 16" v-html="icons.check" /><span><u>G</u>ravar</span></button>
                  <button class="big"><svg viewBox="0 0 16 16" v-html="icons.door" /><span><u>S</u>air</span></button>
                  <button class="big help" aria-label="Ajuda dos itens"><svg viewBox="0 0 16 16" v-html="icons.help" /></button>
                  <button class="big aplica"><svg viewBox="0 0 16 16" v-html="icons.hand" /><span>Aplica (Saída Consumo)</span></button>
                </div>
              </div>
              <div class="subtabs"><button class="on">Produtos da Nota</button><button>Lotes de Sementes</button></div>
            </div>
          </div>
        </article>
      </section>
    </main>

    <div class="teal-strip low-strip" />
    <footer class="status">
      <span class="s1">Unisystem® Sistemas Agricola</span>
      <span class="s2"><em>GEOVANI.SANTOS</em></span>
      <span class="s3">NUCLEO TROPICAL - CELSO GRIESANG E OUTRO - PEDRA PRETA (TROPICAL)</span>
      <span class="s4">2024/2024</span>
      <span class="s5">13:38:19 - 11/03/2024</span>
    </footer>

    <div class="taskbar">
      <button class="t" aria-label="Iniciar"><svg class="i16" viewBox="0 0 16 16" v-html="icons.win" /></button>
      <button class="t" aria-label="Chrome"><svg class="i24" viewBox="0 0 24 24" v-html="icons.chrome" /></button>
      <button class="t" aria-label="Explorador"><svg class="i24" viewBox="0 0 24 24" v-html="icons.folder" /></button>
      <button class="t wide open"><svg class="i24" viewBox="0 0 24 24" v-html="icons.outlook" />Caixa de Entrada - ...</button>
      <button class="t" aria-label="Chat"><svg class="i24" viewBox="0 0 24 24" v-html="icons.bird" /></button>
      <button class="t" aria-label="Notas"><svg class="i24" viewBox="0 0 24 24" v-html="icons.sticky" /></button>
      <button class="t wide open active"><svg class="i24" viewBox="0 0 24 24" v-html="icons.snip" />Captura e Esboço</button>
      <button class="t" aria-label="Painel"><svg class="i24" viewBox="0 0 24 24" v-html="icons.panel" /></button>
      <button class="t" aria-label="Excel"><svg class="i24" viewBox="0 0 24 24" v-html="icons.excel" /></button>
      <button class="t wide open"><svg class="i24" viewBox="0 0 16 16" v-html="brand" />Unisystem®</button>
      <button class="t wide open"><svg class="i24" viewBox="0 0 16 16" v-html="brand" />Unisystem®</button>
      <div class="tray">
        <button class="weather"><svg class="i24" viewBox="0 0 24 24" v-html="icons.rain" />Chu...</button>
        <svg class="chev" viewBox="0 0 12 7"><path d="M1 6l5-5 5 5" fill="none" stroke="#fff" stroke-width="1.500" /></svg>
        <svg v-for="t in ['t1', 't2', 't3', 't4']" :key="t" class="i16" viewBox="0 0 16 16" v-html="icons[t]" />
        <p class="lang">POR<br />PTB</p>
        <p class="clock">13:38<br />11/03/2024</p>
        <svg class="i18" viewBox="0 0 18 18" v-html="icons.note" />
      </div>
    </div>

    <div class="dialog" role="alertdialog" aria-labelledby="dlg-title">
      <header><span id="dlg-title">Aviso</span><button aria-label="Fechar aviso"><svg viewBox="0 0 10 10"><path d="M1 1l8 8M9 1L1 9" stroke="#3d4654" stroke-width="2" /></svg></button></header>
      <div class="msg"><svg viewBox="0 0 32 31" v-html="icons.warn" /><p>Exclusão resultará em movimentação de lote negativa!<br />Operação não permitida!</p></div>
      <button class="ok">OK</button>
    </div>
  </div>
</template>

<style>
html, body { margin: 0; background: #f0f0f0; }
</style>

<style scoped>
.app { position: relative; display: flex; flex-direction: column; min-height: 100vh; overflow: hidden; background: #f0f0f0; color: #000; font: 11px/14px "Liberation Sans", Arial, sans-serif; }
.app *, .app *::before, .app *::after { box-sizing: border-box; }
button, input, select { font: inherit; color: inherit; margin: 0; padding: 0; border: 0; border-radius: 0; background: none; }
button { white-space: nowrap; }
ul, h1, h2, p { margin: 0; padding: 0; list-style: none; font-weight: normal; }
i { font-style: normal; }
svg { display: block; flex: none; }
.i16 { width: 16px; height: 16px; }
.i18 { width: 18px; height: 18px; }
.i24 { width: 24px; height: 24px; }
.i36 { width: 36px; height: 36px; }

.titlebar { position: relative; display: flex; align-items: center; height: 23px; padding-left: 2px; gap: 5px; background: #c6c7cc; color: #76777c; font: 11px/20px "Open Sans", "Noto Sans", sans-serif; border-bottom: 1px solid #a0a0a0; }
.peek { position: absolute; left: 563px; top: 0; width: 241px; height: 1px; background: linear-gradient(90deg, #707c93 20%, #1c1c1c 20%); }
.winbtns { display: flex; margin-left: auto; align-self: flex-start; padding-right: 1px; }
.winbtns button { width: 47px; height: 22px; border: 1px solid #a2a3a8; border-top: 0; margin-left: -1px; display: grid; place-items: center; }
.winbtns svg { width: 12px; height: 12px; }

.toolbar { display: flex; height: 65px; margin-right: 1px; padding: 5px 1px 0 4px; border: 1px solid #a0a0a0; border-top-color: #fff; }
.toolbar button { flex: none; width: 57px; display: flex; flex-direction: column; align-items: center; gap: 5px; }
.toolbar button:nth-child(12), .toolbar button:nth-child(13) { width: 60px; }
.toolbar .exit { margin-left: auto; width: 40px; padding-top: 8px; }
.teal-strip { flex: none; height: 12px; border: solid #fff; border-width: 2px 0 0 1px; border-bottom: 1px solid #a0a0a0; background: #008080; }

.main { flex: 1; display: flex; min-height: 0; }
.side { flex: none; width: 250px; display: flex; flex-direction: column; gap: 4px; padding: 2px 0 0 1px; font-size: 12px; }
.side-head { display: flex; align-items: center; justify-content: space-between; height: 16px; padding: 0 6px 0 4px; border: 1px solid #808080; border-radius: 2px; font: 11px/14px "DejaVu Sans Condensed", sans-serif; margin-bottom: -3px; }
.side-head svg { width: 8px; height: 10px; }
.box { display: flex; flex-direction: column; border: 1px solid #a0a0a0; padding: 1px; background: #fff; }
.menu { height: 302px; }
.favs { height: 134px; }
.wins { flex: 1; }
h2 { flex: none; height: 17px; background: #448080; border: 1px solid #a0a0a0; color: #ffffe1; font-weight: bold; font-size: 11px; line-height: 14px; text-align: center; margin-bottom: 1px; }
.list { flex: 1; min-height: 0; display: flex; flex-direction: column; background: #ffffe1; border: 1px solid #e3e3e3; border-top-color: #696969; border-left-color: #696969; }
.view { flex: 1; min-height: 0; display: flex; }
ul { flex: 1; min-width: 0; overflow: hidden; }
li { height: 18px; line-height: 18px; white-space: nowrap; }
.leaf { padding-left: 52px; }
.node { display: flex; align-items: center; padding-left: 20px; gap: 6px; }
.pm { width: 9px; height: 9px; border: 1px solid #444; font-size: 9px; line-height: 7px; text-align: center; margin-top: 3px; }
.root { padding-left: 1px; }
.fav { padding-left: 18px; }
.current { background: #f0f0f0; }
.vbar { flex: none; width: 17px; display: flex; flex-direction: column; }
.hbar { flex: none; height: 17px; display: flex; background: #f0f0f0; padding-right: 17px; }
.vbar b, .hbar b { flex: none; width: 17px; height: 17px; background: #fff; border: 1px solid #bdbdbd; display: grid; place-items: center; }
.vbar b svg { width: 8px; height: 5px; }
.hbar b svg { width: 5px; height: 8px; }
b path { fill: none; stroke: #505050; stroke-width: 2; }
.track { background: #fff; border: 1px solid #bdbdbd; }
.thumb, .hthumb { background: #dcdcdc; border: 1px solid #a5a5a5; display: grid; place-items: center; }
.v1 { flex: 128; }
.menu .vbar .track { flex: 55; }
.menu .vbar .track.after { flex: 45; }
.v2 { flex: 49; }
.favs .vbar .track { flex: 11; }
.short { flex: 111; }
.menu .hbar .track { flex: 82; }
.long { flex: 143; }
.favs .hbar .track { flex: 50; }
.thumb u { width: 7px; height: 8px; background: repeating-linear-gradient(#606060 0 2px, transparent 2px 3px); }
.hthumb u { width: 8px; height: 7px; background: repeating-linear-gradient(90deg, #606060 0 2px, transparent 2px 3px); }

.desk { position: relative; flex: 1; min-width: 0; margin-left: 4px; border: 2px solid #696969; border-right: 0; border-bottom: 0; }
.logo { position: absolute; right: 5px; bottom: 5px; height: 58px; width: 340px; background: #fff; display: flex; flex-direction: column; align-items: flex-end; justify-content: flex-end; overflow: hidden; }
.logo strong { font: bold 50px/46px "DejaVu Sans", sans-serif; color: transparent; background: linear-gradient(#0a8a43 40%, #04502c 75%); background-clip: text; }
.logo span { font-weight: bold; font-size: 10px; line-height: 10px; color: #76b82a; }

.win { position: absolute; left: 151px; right: 149px; top: 5px; background: #e6eeff; border: 1px solid #3e4250; padding: 0 8px 8px 7px; }
.win-head { display: flex; align-items: center; height: 30px; padding: 7px 2px 0; gap: 3px; }
.win-head h1 { flex: 1; margin-left: 1px; color: #8e9096; font: 11px/20px "Open Sans", "Noto Sans", sans-serif; }
.win-head button { width: 17px; height: 17px; border: 1px solid #7f8fb5; background: #f4f7ff; display: grid; place-items: center; }
.win-head button svg { width: 10px; height: 10px; }
.win-body { background: #f0f0f0; padding: 1px 0 0 1px; }
.tabs { display: flex; align-items: flex-end; height: 27px; padding-left: 1px; }
.tabs button { width: 129px; height: 25px; border: 1px solid #fff; border-right-color: #e3e3e3; border-bottom: 0; padding-bottom: 2px; }
.tabs .on { width: 133px; height: 27px; border-right: 2px solid #696969; padding-bottom: 4px; }
.page { border: 1px solid #fff; border-right: 2px solid #696969; border-bottom: 2px solid #696969; padding: 8px 2px 3px 2px; }
.group { border: 1px solid #a0a0a0; box-shadow: inset 1px 1px #fff; padding: 2px 6px 0; display: flex; flex-direction: column; gap: 2px; }
.row { display: flex; align-items: flex-end; gap: 5px; }
.top0 { padding-right: 10px; }
.top1 { padding-right: 3px; }
.f { min-width: 0; }
.f > label { display: block; height: 14px; white-space: nowrap; }
.f > label.r { display: flex; justify-content: flex-end; padding-right: 1px; }
.ctl { display: flex; height: 21px; padding: 1px; background: #fff; border: 1px solid; border-color: #a0a0a0 #fff #fff #a0a0a0; box-shadow: inset 1px 1px #696969, inset -1px -1px #e3e3e3; color: #000080; }
.cyan { background: #80ffff; }
.yellow { background: #ffff80; }
.gray { background: #c0c0c0; }
input, select { flex: 1; min-width: 0; width: 0; padding: 0 1px; outline: 0; opacity: 1; }
select { appearance: none; overflow: hidden; padding-left: 2px; }
input.r { text-align: right; padding-right: 2px; }
input.c, .code input { text-align: center; }
.off input, .off select { color: #777; }
.drop, .cal { flex: none; width: 16px; background: #f0f0f0; border: 1px solid; border-color: #fff #696969 #696969 #fff; box-shadow: inset -1px -1px #a0a0a0; display: grid; place-items: center; pointer-events: none; }
.drop::after { content: ""; border: 4px solid transparent; border-top-color: #000; border-bottom: 0; }
.drop.dim::after { border-top-color: #999; }
.cal { width: 20px; pointer-events: auto; }
.cal i { width: 12px; height: 12px; font-size: 9px; line-height: 11px; text-align: center; color: #000; background: #fff; border-right: 1px solid #00126b; border-bottom: 1px solid #00126b; }
.btn { display: flex; align-items: center; justify-content: center; gap: 4px; background: #f0f0f0; border: 1px solid; border-color: #fff #696969 #696969 #fff; box-shadow: inset -1px -1px #a0a0a0; }
.btn svg { width: 16px; height: 16px; }
.btn:disabled, .big:disabled { color: #a0a0a0; text-shadow: 1px 1px #fff; }
.square { flex: none; width: 27px; height: 27px; margin-left: 7px; margin-bottom: 1px; }
.square svg { width: 18px; height: 18px; }
.find { width: 22px; height: 21px; }
.find svg { width: 18px; height: 18px; }
.split { display: flex; gap: 5px; }
.left { flex: 1; min-width: 0; display: flex; flex-direction: column; gap: 3px; }
.left > .row { padding-right: 3px; }
fieldset { position: relative; min-width: 0; height: 28px; margin: 0; padding: 8px 0 0 8px; border: 1px solid #a0a0a0; box-shadow: inset 1px 1px #fff; display: flex; align-items: center; justify-content: space-between; color: #000080; }
legend { position: absolute; left: 7px; top: -7px; padding: 0 4px; background: #f0f0f0; line-height: 13px; border: solid #c86a8c; border-width: 0 1px; }
fieldset label { display: flex; align-items: center; gap: 5px; }
fieldset input { appearance: none; flex: none; width: 11px; height: 11px; padding: 0; border: 1px solid; border-color: #696969 #ddd #ddd #696969; border-radius: 50%; background: #fff; }
fieldset input:checked { background: radial-gradient(#000 0 2px, #fff 3px); }
.lanc { display: flex; align-items: flex-end; height: 21px; }
.code { width: 29px; margin: 0 4px 0 2px; }
.grow { flex: 1; }
.row.totals { gap: 4px; align-items: flex-start; padding: 0 1px; }
.frame { border: 1px solid #fff; border-right-color: #a0a0a0; border-bottom-color: #a0a0a0; padding: 2px; display: flex; flex-direction: column; }
.print { flex: 0 0 86px; height: 44px; margin-left: 11px; }
.print .btn { flex: 1; gap: 4px; justify-content: flex-start; padding-left: 3px; }
.print .btn:last-child { gap: 10px; }
.acts { flex: 0 0 97px; margin-top: 3px; gap: 1px; }
.acts .btn { flex: 1; gap: 8px; }
.acts .focus { border-color: #696969; box-shadow: inset 1px 1px #fff, inset -2px -2px #808080; }

.panel { margin-top: 4px; border: 1px solid #fff; border-right-color: #a0a0a0; border-bottom-color: #a0a0a0; padding: 2px 3px 1px; }
table { width: 100%; table-layout: fixed; border-collapse: separate; border-spacing: 0; border: 1px solid #696969; background: #ffffe1; }
th, td { height: 17px; padding: 0 3px; line-height: 14px; text-align: right; white-space: nowrap; overflow: hidden; font-weight: normal; border-right: 1px solid #c8c8c8; }
th { background: #008080; color: #fff; border-right-color: #000; padding: 0 3px 0 1px; }
.l { text-align: left; }
.c { text-align: center; }
td.l, th.l { padding-left: 2px; }
td.c { padding: 0; }
th.s, td.s { border-left: 1px solid #fff; }
.sort { display: inline-block; width: 8px; height: 8px; margin-left: 20px; }
.sel td { background: #0078d7; color: #fff; }
.blank td { height: 93px; border-right: 0; }
tfoot td { height: 20px; background: #f0f0f0; border-right: 0; }
tfoot .line { border-left: 1px solid #000; }
.low { gap: 4px; margin: 3px 8px 0 6px; }
.low0 { margin-top: 2px; }
.low1 { padding-left: 2px; }
.low2 { padding-left: 1px; margin-top: 6px; }
.bar { display: flex; align-items: center; gap: 6px; height: 43px; margin: 8px 1px 0; padding: 0 10px 0 6px; background: #448080; border-top: 1px solid #a0a0a0; }
.hint { flex: 1; color: #fff; padding-top: 4px; white-space: nowrap; }
.big { flex: none; width: 84px; height: 39px; background: #f0f0f0; border: 1px solid; border-color: #fff #a0a0a0 #a0a0a0 #fff; display: flex; flex-direction: column; align-items: center; justify-content: space-between; padding: 2px 0 1px; }
.big svg { width: 16px; height: 16px; }
.side-by { flex-direction: row; justify-content: center; gap: 4px; }
.big.help { width: 26px; height: 28px; padding: 4px 0; margin: 6px -1px 0; }
.big.help svg { width: 18px; height: 18px; }
.aplica { width: 125px; }
.subtabs { display: flex; align-items: flex-start; height: 22px; }
.subtabs button { width: 139px; height: 20px; border: 1px solid #696969; border-width: 1px 2px 2px 1px; }
.subtabs .on { width: 142px; height: 22px; border-width: 0 1px 2px 0; padding-top: 3px; }

.low-strip { height: 11px; border-width: 1px 0 0 1px; border-bottom: 1px solid #a0a0a0; }
.status { display: flex; gap: 2px; height: 19px; padding: 3px 1px 1px; }
.status span { border: 1px solid; border-color: #a0a0a0 #fff #fff #a0a0a0; display: flex; justify-content: center; overflow: hidden; white-space: nowrap; line-height: 14px; min-width: 0; }
.status em { font-style: normal; }
.status .s1 { flex: 400 400 0; justify-content: flex-start; padding-left: 1px; }
.s2 { flex: 82 82 0; }
.s3 { flex: 498 498 0; }
.s4 { flex: 98 98 0; }
.s5 { flex: 282 282 0; }

.taskbar { flex: none; display: flex; height: 40px; background: #101010; color: #fff; font: 11px/18px "Open Sans", "Noto Sans", sans-serif; }
.t { flex: 0 1 50px; display: flex; align-items: center; justify-content: center; }
.t.wide { flex: 0 1 151px; justify-content: flex-start; gap: 4px; padding-left: 5px; margin: 0 3px; }
.t.open { border-bottom: 2px solid #8ea2cc; }
.t.t.active { flex-basis: 159px; background: #353535; margin: 0; padding-left: 11px; }
.tray { flex: 1; display: flex; align-items: center; justify-content: flex-end; gap: 8px; padding-right: 24px; }
.weather { display: flex; align-items: center; gap: 6px; margin-right: 22px; font-size: 13px; }
.chev { width: 12px; height: 7px; margin-right: 2px; }
.lang, .clock { text-align: center; }
.lang { margin-left: 1px; }
.clock { margin: 0 9px 0 4px; }

.dialog { position: absolute; left: 542px; top: 380px; width: 363px; height: 136px; background: #f0f0f0; border: 1px solid #5f6673; border-bottom-width: 2px; box-shadow: inset 0 0 0 2px #a8adb7; padding: 1px 2px; display: flex; flex-direction: column; font: 11px/15px "Open Sans", "Noto Sans", sans-serif; }
.dialog header { flex: none; display: flex; align-items: center; justify-content: space-between; height: 24px; padding-left: 3px; background: #748191; color: #aab2bd; }
.dialog header button { width: 33px; height: 24px; border-left: 1px solid #67727f; display: grid; place-items: center; }
.dialog header svg { width: 9px; height: 9px; }
.msg { display: flex; gap: 15px; padding: 15px 0 0 12px; }
.msg svg { width: 32px; height: 31px; margin-top: 2px; }
.msg p { white-space: nowrap; }
.ok { width: 75px; height: 26px; margin: 17px 0 0 141px; border: 1px solid #555; box-shadow: inset 1px 1px #fff, inset -2px -2px #808080; }
</style>
